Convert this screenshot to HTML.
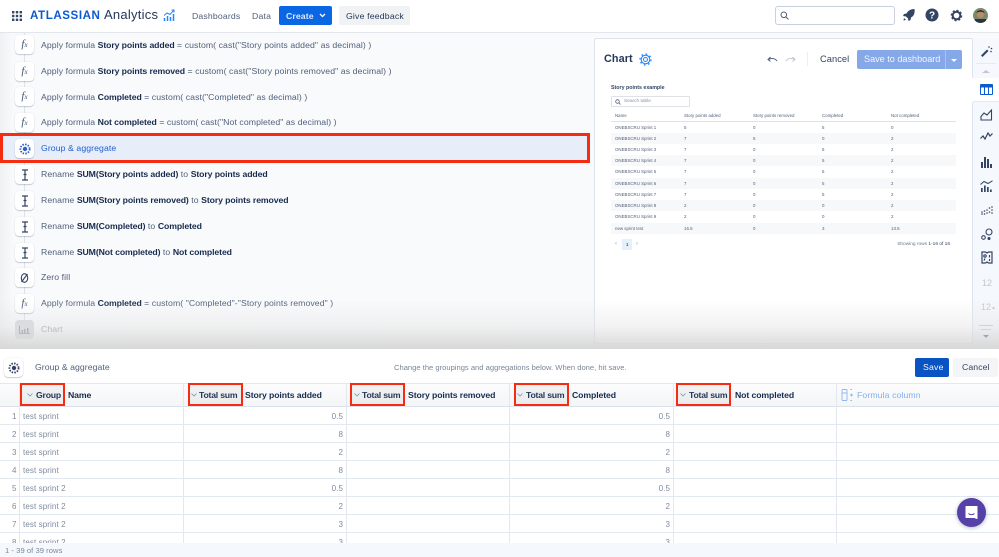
<!DOCTYPE html>
<html><head><meta charset="utf-8"><style>
*{box-sizing:border-box}
html,body{margin:0;padding:0;width:999px;height:557px;overflow:hidden;background:#fff}
body{font-family:"Liberation Sans",sans-serif;position:relative;color:#42526e}
.a{position:absolute}
.t{position:absolute;white-space:nowrap;line-height:14px}
.s{font-size:8.7px;color:#505f79;left:41px;letter-spacing:.08px}
.s b{color:#172b4d;letter-spacing:-.1px}
.ic{position:absolute;left:15px;width:19px;height:19px;background:#fff;border-radius:4px;box-shadow:0 1px 1px rgba(9,30,66,.2),0 0 1px rgba(9,30,66,.15);text-align:center;font:italic 11px/18px "Liberation Serif",serif;color:#42526e}
.ic svg{display:block;margin:3.5px auto 0}
.l{position:absolute;background:#e1e8f0}
.ct{position:absolute;font-size:4.4px;color:#505f79;white-space:nowrap;line-height:6px}
.cell{position:absolute;font-size:8px;color:#7f8aa0;white-space:nowrap;line-height:10px;letter-spacing:.1px}
.h{position:absolute;top:389px;font-size:8.7px;font-weight:bold;color:#172b4d;white-space:nowrap;line-height:12px;letter-spacing:-.1px}
.ts{letter-spacing:-.22px;color:#253858}
.red{position:absolute;border:2.8px solid #f52c12;background:rgba(120,120,120,.07)}
</style></head><body>

<!-- top panel background -->
<div class="a" style="left:0;top:33px;width:999px;height:316px;background:#f9fafc"></div>
<div class="a" style="left:0;top:33px;width:14px;height:316px;background:linear-gradient(90deg,#f0f1f3,rgba(249,250,252,0))"></div>

<!-- step lines -->
<div class="a" style="left:23.500px;top:33px;width:1px;height:300px;background:#dfe3e9"></div>

<!-- highlighted row -->
<div class="a" style="left:1px;top:135px;width:588px;height:27px;background:#e8eef9"></div>
<div class="a" style="left:0;top:133px;width:590px;height:30px;border:3px solid #f52c12"></div>

<!-- steps -->
<div class="ic" style="top:35px">f<span style="font-size:7px">x</span></div>
<div class="ic" style="top:62px">f<span style="font-size:7px">x</span></div>
<div class="ic" style="top:87px">f<span style="font-size:7px">x</span></div>
<div class="ic" style="top:113px">f<span style="font-size:7px">x</span></div>
<div class="ic" style="top:139px"><svg width="12" height="12" fill="none" stroke="#2c5fc9"><circle cx="6" cy="6" r="2.200" fill="#2c5fc9" stroke="none"/><circle cx="6" cy="6" r="4.600" stroke-width="1.800" stroke-dasharray="1.500 1.200"/></svg></div>
<div class="ic" style="top:165px"><svg width="8" height="12" fill="none" stroke="#344563" stroke-width="1.200"><path d="M1 1H7M1 11H7M4 1V11M2.500 5.500H5.500" /></svg></div>
<div class="ic" style="top:191px"><svg width="8" height="12" fill="none" stroke="#344563" stroke-width="1.200"><path d="M1 1H7M1 11H7M4 1V11M2.500 5.500H5.500" /></svg></div>
<div class="ic" style="top:217px"><svg width="8" height="12" fill="none" stroke="#344563" stroke-width="1.200"><path d="M1 1H7M1 11H7M4 1V11M2.500 5.500H5.500" /></svg></div>
<div class="ic" style="top:243px"><svg width="8" height="12" fill="none" stroke="#344563" stroke-width="1.200"><path d="M1 1H7M1 11H7M4 1V11M2.500 5.500H5.500" /></svg></div>
<div class="ic" style="top:268px"><svg width="9" height="12" fill="none" stroke="#344563" stroke-width="1.100"><ellipse cx="4.500" cy="6" rx="3.200" ry="4.300"/><path d="M1.500 10 7.500 2"/></svg></div>
<div class="ic" style="top:294px">f<span style="font-size:7px">x</span></div>
<div class="ic" style="top:320px;background:#d4d7dc;box-shadow:none"><svg width="11" height="8" style="margin-top:6px" fill="#7d8899"><rect x="0" y="0" width="1" height="8"/><rect x="2.500" y="4" width="1.500" height="3"/><rect x="5" y="3" width="1.500" height="4"/><rect x="8" y="2" width="1.500" height="5"/><rect x="0" y="7" width="11" height="1"/></svg></div>

<div class="t s" style="top:38px">Apply formula <b>Story points added</b> = custom( cast("Story points added" as decimal) )</div>
<div class="t s" style="top:64px">Apply formula <b>Story points removed</b> = custom( cast("Story points removed" as decimal) )</div>
<div class="t s" style="top:90px">Apply formula <b>Completed</b> = custom( cast("Completed" as decimal) )</div>
<div class="t s" style="top:115px">Apply formula <b>Not completed</b> = custom( cast("Not completed" as decimal) )</div>
<div class="t s" style="top:141px;color:#1f5fd0">Group &amp; aggregate</div>
<div class="t s" style="top:167px">Rename <b>SUM(Story points added)</b> to <b>Story points added</b></div>
<div class="t s" style="top:193px">Rename <b>SUM(Story points removed)</b> to <b>Story points removed</b></div>
<div class="t s" style="top:219px">Rename <b>SUM(Completed)</b> to <b>Completed</b></div>
<div class="t s" style="top:245px">Rename <b>SUM(Not completed)</b> to <b>Not completed</b></div>
<div class="t s" style="top:270px">Zero fill</div>
<div class="t s" style="top:296px">Apply formula <b>Completed</b> = custom( "Completed"-"Story points removed" )</div>
<div class="t s" style="top:322px;color:#8a94a6">Chart</div>

<!-- chart panel -->
<div class="a" style="left:594px;top:38px;width:379px;height:306px;background:#fff;border:1px solid #dde3ec;border-radius:2px"></div>
<div class="t" style="left:604px;top:52px;font-size:10.800px;font-weight:bold;color:#253858;letter-spacing:.1px">Chart</div>
<svg class="a" style="left:639px;top:53px" width="13" height="13" fill="none" stroke="#2684ff"><circle cx="6.500" cy="6.500" r="2"/><circle cx="6.500" cy="6.500" r="4.300" stroke-width="1.100"/><circle cx="6.500" cy="6.500" r="5.500" stroke-width="1.300" stroke-dasharray="1.700 2.600"/></svg>
<svg class="a" style="left:767px;top:56px" width="11" height="7" fill="none" stroke="#505f79" stroke-width="1"><path d="M10 5C8 2 4 2 1.500 3.500M3.500 1 1 3.500 3.500 5.500"/></svg>
<svg class="a" style="left:785px;top:56px" width="11" height="7" fill="none" stroke="#c1c7d0" stroke-width="1"><path d="M1 5C3 2 7 2 9.500 3.500M7.500 1 10 3.500 7.500 5.500"/></svg>
<div class="a" style="left:807px;top:52px;width:1px;height:14px;background:#eceef1"></div>
<div class="t" style="left:820px;top:52px;font-size:9.300px;color:#344563;letter-spacing:.05px">Cancel</div>
<div class="a" style="left:857px;top:50px;width:105px;height:19px;background:#85a8e8;border-radius:2px"></div>
<div class="a" style="left:945px;top:50px;width:1px;height:19px;background:#a9c1ee"></div>
<div class="t" style="left:864px;top:52px;font-size:9.100px;color:#f2f6fd">Save to dashboard</div>
<div class="a" style="left:951px;top:58.500px;border:3.500px solid transparent;border-top:3px solid #fff;border-bottom:0"></div>

<div class="t" style="left:611px;top:81px;font-size:5.300px;font-weight:bold;color:#344563">Story points example</div>
<div class="a" style="left:611px;top:96px;width:79px;height:11px;border:1px solid #dfe1e6;border-radius:1px;background:#fff"></div>
<svg class="a" style="left:615px;top:99px" width="6" height="6" fill="none" stroke="#505f79" stroke-width=".8"><circle cx="2.500" cy="2.500" r="1.800"/><path d="M4 4 5.500 5.500"/></svg>
<div class="ct" style="left:624px;top:98.500px;color:#8993a4;font-size:4.800px">Search table</div>

<div class="ct" style="left:615px;top:113px">Name</div>
<div class="ct" style="left:684px;top:113px">Story points added</div>
<div class="ct" style="left:753px;top:113px">Story points removed</div>
<div class="ct" style="left:822px;top:113px">Completed</div>
<div class="ct" style="left:891px;top:113px">Not completed</div>
<div class="a" style="left:611px;top:121px;width:345px;height:1px;background:#dfe1e6"></div>

<div class="a" style="left:611px;top:133px;width:345px;height:11px;background:#f7f8f9"></div>
<div class="a" style="left:611px;top:155px;width:345px;height:11px;background:#f7f8f9"></div>
<div class="a" style="left:611px;top:178px;width:345px;height:11px;background:#f7f8f9"></div>
<div class="a" style="left:611px;top:200px;width:345px;height:11px;background:#f7f8f9"></div>
<div class="a" style="left:611px;top:223px;width:345px;height:11px;background:#f7f8f9"></div>

<div class="ct" style="left:615px;top:124.500px">ONEBSCRU Sprint 1</div><div class="ct" style="left:684px;top:124.500px">5</div><div class="ct" style="left:753px;top:124.500px">0</div><div class="ct" style="left:822px;top:124.500px">5</div><div class="ct" style="left:891px;top:124.500px">0</div>
<div class="ct" style="left:615px;top:135.500px">ONEBSCRU Sprint 2</div><div class="ct" style="left:684px;top:135.500px">7</div><div class="ct" style="left:753px;top:135.500px">5</div><div class="ct" style="left:822px;top:135.500px">0</div><div class="ct" style="left:891px;top:135.500px">2</div>
<div class="ct" style="left:615px;top:147px">ONEBSCRU Sprint 3</div><div class="ct" style="left:684px;top:147px">7</div><div class="ct" style="left:753px;top:147px">0</div><div class="ct" style="left:822px;top:147px">5</div><div class="ct" style="left:891px;top:147px">2</div>
<div class="ct" style="left:615px;top:158px">ONEBSCRU Sprint 4</div><div class="ct" style="left:684px;top:158px">7</div><div class="ct" style="left:753px;top:158px">0</div><div class="ct" style="left:822px;top:158px">5</div><div class="ct" style="left:891px;top:158px">2</div>
<div class="ct" style="left:615px;top:169px">ONEBSCRU Sprint 5</div><div class="ct" style="left:684px;top:169px">7</div><div class="ct" style="left:753px;top:169px">0</div><div class="ct" style="left:822px;top:169px">5</div><div class="ct" style="left:891px;top:169px">2</div>
<div class="ct" style="left:615px;top:180.500px">ONEBSCRU Sprint 6</div><div class="ct" style="left:684px;top:180.500px">7</div><div class="ct" style="left:753px;top:180.500px">0</div><div class="ct" style="left:822px;top:180.500px">5</div><div class="ct" style="left:891px;top:180.500px">2</div>
<div class="ct" style="left:615px;top:191.500px">ONEBSCRU Sprint 7</div><div class="ct" style="left:684px;top:191.500px">7</div><div class="ct" style="left:753px;top:191.500px">0</div><div class="ct" style="left:822px;top:191.500px">5</div><div class="ct" style="left:891px;top:191.500px">2</div>
<div class="ct" style="left:615px;top:203px">ONEBSCRU Sprint 8</div><div class="ct" style="left:684px;top:203px">2</div><div class="ct" style="left:753px;top:203px">0</div><div class="ct" style="left:822px;top:203px">0</div><div class="ct" style="left:891px;top:203px">2</div>
<div class="ct" style="left:615px;top:214px">ONEBSCRU Sprint 9</div><div class="ct" style="left:684px;top:214px">2</div><div class="ct" style="left:753px;top:214px">0</div><div class="ct" style="left:822px;top:214px">0</div><div class="ct" style="left:891px;top:214px">2</div>
<div class="ct" style="left:615px;top:225.500px">new sprint test</div><div class="ct" style="left:684px;top:225.500px">16.5</div><div class="ct" style="left:753px;top:225.500px">0</div><div class="ct" style="left:822px;top:225.500px">3</div><div class="ct" style="left:891px;top:225.500px">13.5</div>

<div class="ct" style="left:615px;top:241px;color:#97a0af;font-size:6px">&#8249;</div>
<div class="a" style="left:622px;top:239px;width:10px;height:11px;background:#e6effc;border-radius:1px"></div>
<div class="ct" style="left:626px;top:241.500px;color:#1f5fd0;font-weight:bold">1</div>
<div class="ct" style="left:636px;top:241px;color:#97a0af;font-size:6px">&#8250;</div>
<div class="ct" style="right:49px;top:242px;font-size:4.800px;color:#6b778c">Showing rows <span style="color:#344563">1-16 of 16</span></div>

<!-- right sidebar -->
<div class="a" style="left:973px;top:38px;width:26px;height:306px;background:#f5f8fc"></div>
<div class="a" style="left:972px;top:78px;width:27px;height:24px;background:#fff"></div>
<svg class="a" style="left:980px;top:45px" width="13" height="13" fill="#344563"><path d="M1 10.500 7 4.500 8.500 6 2.500 12Z"/><circle cx="9" cy="2" r=".8"/><circle cx="11.500" cy="3.500" r=".8"/><circle cx="11" cy="6.500" r=".8"/></svg>
<div class="a" style="left:976px;top:63px;width:20px;height:1px;background:#e6ebf2"></div>
<div class="a" style="left:982px;top:70px;border:4px solid transparent;border-bottom:3.500px solid #c1c7d0;border-top:0"></div>
<svg class="a" style="left:980px;top:84px" width="13" height="11"><rect width="13" height="11" rx="1" fill="#0b5ad0"/><rect x="1" y="3.500" width="3" height="6.500" fill="#fff"/><rect x="5" y="3.500" width="3" height="6.500" fill="#fff"/><rect x="9" y="3.500" width="3" height="6.500" fill="#fff"/></svg>
<div class="a" style="left:973px;top:101px;width:26px;height:1px;background:#e4e9f0"></div>
<svg class="a" style="left:980px;top:109px" width="13" height="12" fill="none" stroke="#344563" stroke-width="1.100"><path d="M1 11V7.500L4 4 7 6 11.500 1V11Z"/></svg>
<svg class="a" style="left:980px;top:131px" width="13" height="10" fill="none" stroke="#344563" stroke-width="1.200"><path d="M.5 7.500 3 5 5 8 8 2 10 5 12.500 2.500"/></svg>
<svg class="a" style="left:981px;top:156px" width="11" height="12" fill="#344563"><rect x="0" y="6" width="2" height="6"/><rect x="3" y="1" width="2" height="11"/><rect x="6" y="3" width="2" height="9"/><rect x="9" y="8" width="2" height="4"/></svg>
<svg class="a" style="left:980px;top:180px" width="13" height="12"><path d="M.5 4.500 4 1.500 8 3.500 12.500 .8" fill="none" stroke="#344563"/><g fill="#344563"><rect x="1" y="8" width="1.700" height="4"/><rect x="4" y="5.500" width="1.700" height="6.500"/><rect x="7" y="7" width="1.700" height="5"/><rect x="10" y="9.500" width="1.700" height="2.500"/></g></svg>
<svg class="a" style="left:981px;top:205px" width="12" height="11" fill="#344563"><circle cx="1" cy="9" r=".8"/><circle cx="1" cy="7" r=".8"/><circle cx="3.500" cy="9" r=".8"/><circle cx="3.500" cy="6" r=".8"/><circle cx="6" cy="8" r=".8"/><circle cx="6" cy="5" r=".8"/><circle cx="8.500" cy="7" r=".8"/><circle cx="8.500" cy="3" r=".8"/><circle cx="11" cy="5" r=".8"/><circle cx="11" cy="2" r=".8"/><circle cx="11" cy="8" r=".8"/></svg>
<svg class="a" style="left:981px;top:228px" width="12" height="12" fill="none" stroke="#344563" stroke-width="1.100"><circle cx="8" cy="4" r="3"/><circle cx="2.500" cy="9.500" r="1.800"/><circle cx="8" cy="10.500" r="1" fill="#344563"/></svg>
<svg class="a" style="left:981px;top:251px" width="12" height="13" fill="none" stroke="#344563" stroke-width="1.200"><path d="M1 1H4.500L6 2 7.500 1H11V12H7.500L6 11 4.500 12H1Z"/><circle cx="4" cy="5" r="1.200"/><path d="M3 9.500 4 7.500M8.500 4V6.500M8.500 8V10"/></svg>
<div class="t" style="left:982px;top:276px;font-size:9px;color:#c1c7d0">12</div>
<div class="t" style="left:981px;top:300px;font-size:9px;color:#c1c7d0">12<span style="font-size:5px;vertical-align:1px">&#9650;</span></div>
<div class="a" style="left:979px;top:325px;width:14px;height:1px;background:#c1c7d0"></div>
<div class="a" style="left:981px;top:329px;width:10px;height:1px;background:#c1c7d0"></div>
<div class="a" style="left:983px;top:335px;border:3.500px solid transparent;border-top:3.500px solid #344563;border-bottom:0"></div>

<!-- bottom fade -->
<div class="a" style="left:0;top:300px;width:999px;height:49px;background:linear-gradient(180deg,rgba(225,225,225,0),rgba(226,226,226,.45) 55%,rgba(214,214,214,.95));pointer-events:none"></div>

<!-- header (over first step) -->
<div class="a" style="left:0;top:0;width:999px;height:33px;background:#fff;border-bottom:1px solid #e3e6ea"></div>
<svg class="a" style="left:12px;top:11px" width="10" height="10" fill="#344563"><rect x="0" y="0" width="2.400" height="2.400"/><rect x="3.800" y="0" width="2.400" height="2.400"/><rect x="7.600" y="0" width="2.400" height="2.400"/><rect x="0" y="3.800" width="2.400" height="2.400"/><rect x="3.800" y="3.800" width="2.400" height="2.400"/><rect x="7.600" y="3.800" width="2.400" height="2.400"/><rect x="0" y="7.600" width="2.400" height="2.400"/><rect x="3.800" y="7.600" width="2.400" height="2.400"/><rect x="7.600" y="7.600" width="2.400" height="2.400"/></svg>
<div class="t" style="left:30px;top:9px;font-size:11.600px;font-weight:bold;color:#0b5ad0;letter-spacing:.55px">ATLASSIAN</div>
<div class="t" style="left:104px;top:8px;font-size:13px;color:#253858;letter-spacing:.25px">Analytics</div>
<svg class="a" style="left:163px;top:9px" width="12" height="13" fill="none" stroke="#2684ff" stroke-width="1"><path d="M1 6.500 4 4 7 5.500 11 1M8.500 1H11V3.500"/><path d="M1.500 12V9M4.500 12V7M7.500 12V8M10.500 12V5" stroke-width="1.500"/></svg>
<div class="t" style="left:192px;top:9px;font-size:8.700px;color:#505f79;letter-spacing:.15px">Dashboards</div>
<div class="t" style="left:252px;top:9px;font-size:8.700px;color:#505f79;letter-spacing:.2px">Data</div>
<div class="a" style="left:279px;top:6px;width:53px;height:19px;background:#0b66e4;border-radius:2px"></div>
<div class="t" style="left:286px;top:9px;font-size:8.700px;font-weight:bold;color:#dce9fb;letter-spacing:.1px">Create</div>
<svg class="a" style="left:319px;top:13px" width="7" height="5" fill="none" stroke="#fff" stroke-width="1.300"><path d="M1 1 3.500 3.500 6 1"/></svg>
<div class="a" style="left:339px;top:6px;width:71px;height:19px;background:#f1f2f4;border-radius:2px"></div>
<div class="t" style="left:346px;top:9px;font-size:8.700px;color:#253858;letter-spacing:.18px">Give feedback</div>

<div class="a" style="left:775px;top:6px;width:120px;height:19px;background:#fff;border:1px solid #c8d0dc;border-radius:3px"></div>
<svg class="a" style="left:780px;top:11px" width="9" height="9" fill="none" stroke="#505f79" stroke-width="1"><circle cx="3.800" cy="3.800" r="2.800"/><path d="M6 6 8.500 8.500"/></svg>
<svg class="a" style="left:902px;top:8px" width="14" height="14" fill="#344563"><path d="M12.500 1C9 1 6 2.500 4.500 5.500L2 6 1 8 4 8.500 6 10.500 6.500 13 8.500 12 9 9.500C12 8 13 5 12.500 1Z"/><path d="M2 10 4 12 1.500 12.500Z"/></svg>
<svg class="a" style="left:925px;top:8px" width="14" height="14"><circle cx="7" cy="7" r="6.500" fill="#344563"/><text x="7" y="10.500" font-family="Liberation Sans" font-size="10" font-weight="bold" fill="#fff" text-anchor="middle">?</text></svg>
<svg class="a" style="left:950px;top:9px" width="13" height="13" fill="none" stroke="#344563"><circle cx="6.500" cy="6.500" r="3.800" stroke-width="2"/><circle cx="6.500" cy="6.500" r="5" stroke-width="1.600" stroke-dasharray="2 1.900"/></svg>
<svg class="a" style="left:973px;top:8px" width="15" height="15"><defs><clipPath id="c"><circle cx="7.500" cy="7.500" r="7.500"/></clipPath></defs><g clip-path="url(#c)"><rect width="15" height="15" fill="#7d8a6a"/><circle cx="7.500" cy="6.500" r="3.500" fill="#b98a6e"/><path d="M3.500 5C4 1.500 11 1.500 11.500 5L9.500 3.800H5.500Z" fill="#1f1a16"/><rect x="2" y="11" width="11" height="4" fill="#2b3342"/></g></svg>

<!-- lower panel -->
<div class="a" style="left:0;top:349px;width:999px;height:208px;background:#fff"></div>
<div class="ic" style="left:4px;top:358px;box-shadow:0 1px 1px rgba(9,30,66,.2),0 0 1px rgba(9,30,66,.2)"><svg width="12" height="12" fill="none" stroke="#344563"><circle cx="6" cy="6" r="2.200" fill="#344563" stroke="none"/><circle cx="6" cy="6" r="4.600" stroke-width="1.800" stroke-dasharray="1.500 1.200"/></svg></div>
<div class="t" style="left:35px;top:360px;font-size:8.700px;color:#505f79;letter-spacing:.05px">Group &amp; aggregate</div>
<div class="t" style="left:394px;top:361px;font-size:7.600px;color:#7a869a;letter-spacing:0">Change the groupings and aggregations below. When done, hit save.</div>
<div class="a" style="left:915px;top:358px;width:34px;height:19px;background:#0a53c2;border-radius:2px"></div>
<div class="t" style="left:923px;top:360px;font-size:8.700px;color:#f0f5fd;letter-spacing:.2px">Save</div>
<div class="a" style="left:953px;top:358px;width:45px;height:19px;background:#f4f5f7;border-radius:2px"></div>
<div class="t" style="left:962px;top:360px;font-size:8.700px;color:#344563;letter-spacing:.1px">Cancel</div>

<!-- table header -->
<div class="a" style="left:0;top:383px;width:999px;height:23.500px;background:linear-gradient(180deg,#fcfcfd,#f3f5f7);border-top:1px solid #e4e8ee;border-bottom:1px solid #d9e2ec"></div>

<!-- row lines -->
<div class="l" style="left:0;top:424px;width:999px;height:1px"></div>
<div class="l" style="left:0;top:442px;width:999px;height:1px"></div>
<div class="l" style="left:0;top:460px;width:999px;height:1px"></div>
<div class="l" style="left:0;top:478px;width:999px;height:1px"></div>
<div class="l" style="left:0;top:496px;width:999px;height:1px"></div>
<div class="l" style="left:0;top:514px;width:999px;height:1px"></div>
<div class="l" style="left:0;top:532px;width:999px;height:1px"></div>
<!-- col lines -->
<div class="l" style="left:19px;top:383px;width:1px;height:160px"></div>
<div class="l" style="left:183px;top:383px;width:1px;height:160px"></div>
<div class="l" style="left:346px;top:383px;width:1px;height:160px"></div>
<div class="l" style="left:509px;top:383px;width:1px;height:160px"></div>
<div class="l" style="left:673px;top:383px;width:1px;height:160px"></div>
<div class="l" style="left:836px;top:383px;width:1px;height:160px"></div>

<!-- header cells -->
<div class="red" style="left:20px;top:383px;width:45px;height:23px"></div>
<div class="red" style="left:188px;top:383px;width:55px;height:23px"></div>
<div class="red" style="left:350px;top:383px;width:55px;height:23px"></div>
<div class="red" style="left:514px;top:383px;width:55px;height:23px"></div>
<div class="red" style="left:676px;top:383px;width:55px;height:23px"></div>
<svg class="a" style="left:27px;top:393px" width="6" height="4" fill="none" stroke="#8993a4" stroke-width=".8"><path d="M.5 .5 3 3 5.500 .5"/></svg>
<svg class="a" style="left:191px;top:393px" width="6" height="4" fill="none" stroke="#8993a4" stroke-width=".8"><path d="M.5 .5 3 3 5.500 .5"/></svg>
<svg class="a" style="left:354px;top:393px" width="6" height="4" fill="none" stroke="#8993a4" stroke-width=".8"><path d="M.5 .5 3 3 5.500 .5"/></svg>
<svg class="a" style="left:517px;top:393px" width="6" height="4" fill="none" stroke="#8993a4" stroke-width=".8"><path d="M.5 .5 3 3 5.500 .5"/></svg>
<svg class="a" style="left:680px;top:393px" width="6" height="4" fill="none" stroke="#8993a4" stroke-width=".8"><path d="M.5 .5 3 3 5.500 .5"/></svg>
<div class="h ts" style="left:36px">Group</div>
<div class="h" style="left:68px">Name</div>
<div class="h ts" style="left:199px">Total sum</div>
<div class="h" style="left:245px">Story points added</div>
<div class="h ts" style="left:362px">Total sum</div>
<div class="h" style="left:408px">Story points removed</div>
<div class="h ts" style="left:526px">Total sum</div>
<div class="h" style="left:572px">Completed</div>
<div class="h ts" style="left:689px">Total sum</div>
<div class="h" style="left:735px">Not completed</div>
<svg class="a" style="left:841px;top:389px" width="12" height="12" fill="none" stroke="#8fb4f2" stroke-width=".9"><rect x="1" y=".5" width="5" height="11" rx="1"/><path d="M1 4H6M9.500 .5H11M9.500 11.500H11M9 6H12M10.500 4.500V7.500"/></svg>
<div class="h" style="left:857px;color:#85aef0;font-weight:normal;letter-spacing:.1px">Formula column</div>

<!-- body cells -->
<div class="cell" style="left:12px;top:411.500px">1</div><div class="cell" style="left:23px;top:411.500px">test sprint</div><div class="cell" style="right:656px;top:411.500px">0.5</div><div class="cell" style="right:329px;top:411.500px">0.5</div>
<div class="cell" style="left:12px;top:429.500px">2</div><div class="cell" style="left:23px;top:429.500px">test sprint</div><div class="cell" style="right:656px;top:429.500px">8</div><div class="cell" style="right:329px;top:429.500px">8</div>
<div class="cell" style="left:12px;top:447.500px">3</div><div class="cell" style="left:23px;top:447.500px">test sprint</div><div class="cell" style="right:656px;top:447.500px">2</div><div class="cell" style="right:329px;top:447.500px">2</div>
<div class="cell" style="left:12px;top:465.500px">4</div><div class="cell" style="left:23px;top:465.500px">test sprint</div><div class="cell" style="right:656px;top:465.500px">8</div><div class="cell" style="right:329px;top:465.500px">8</div>
<div class="cell" style="left:12px;top:483.500px">5</div><div class="cell" style="left:23px;top:483.500px">test sprint 2</div><div class="cell" style="right:656px;top:483.500px">0.5</div><div class="cell" style="right:329px;top:483.500px">0.5</div>
<div class="cell" style="left:12px;top:501.500px">6</div><div class="cell" style="left:23px;top:501.500px">test sprint 2</div><div class="cell" style="right:656px;top:501.500px">2</div><div class="cell" style="right:329px;top:501.500px">2</div>
<div class="cell" style="left:12px;top:519.500px">7</div><div class="cell" style="left:23px;top:519.500px">test sprint 2</div><div class="cell" style="right:656px;top:519.500px">3</div><div class="cell" style="right:329px;top:519.500px">3</div>
<div class="cell" style="left:12px;top:537.500px">8</div><div class="cell" style="left:23px;top:537.500px">test sprint 2</div><div class="cell" style="right:656px;top:537.500px">3</div><div class="cell" style="right:329px;top:537.500px">3</div>

<!-- footer -->
<div class="a" style="left:0;top:543px;width:999px;height:14px;background:#f5f9fd"></div>
<div class="t" style="left:5px;top:545px;font-size:7.600px;line-height:12px;color:#7a869a;letter-spacing:.05px">1 - 39 of 39 rows</div>

<!-- chat bubble -->
<div class="a" style="left:957px;top:498px;width:29px;height:29px;border-radius:50%;background:#5641a8;box-shadow:0 1px 4px rgba(9,30,66,.3)"></div>
<svg class="a" style="left:964px;top:505px" width="15" height="15" fill="none"><path d="M2 1.500H13V13.500L10.500 12.500H2Z" fill="#fff" stroke="#fff" stroke-linejoin="round" stroke-width="1"/><path d="M4.500 8.500C6 10 9 10 10.500 8.500" stroke="#5641a8" stroke-width="1"/></svg>

</body></html>
